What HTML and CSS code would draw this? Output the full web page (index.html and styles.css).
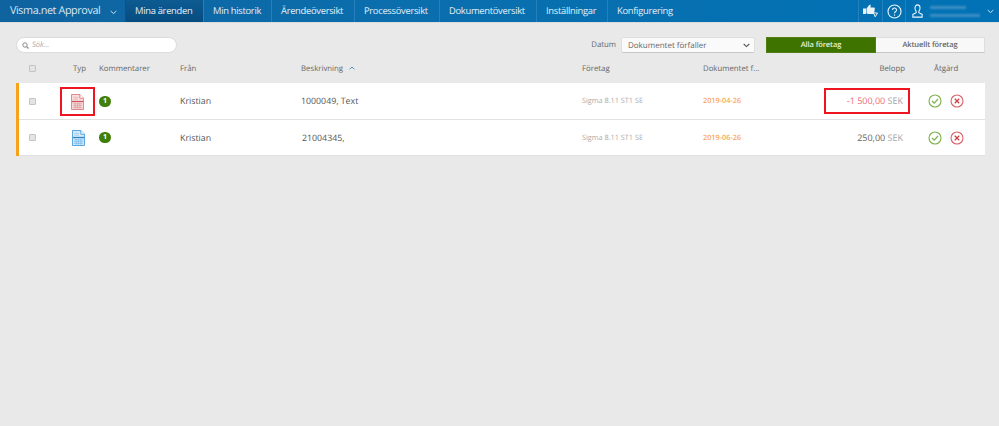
FILE: index.html
```html
<!DOCTYPE html>
<html lang="sv">
<head>
<meta charset="utf-8">
<title>Visma.net Approval</title>
<link rel="stylesheet" href="styles.css">
</head>
<body>
<header class="nav">
  <div class="brand"><span>Visma.net Approval</span>
    <svg class="chev" width="7" height="5" viewBox="0 0 7 5"><path d="M.7 1l2.800 2.600L6.300 1" fill="none" stroke="#cfe3f1" stroke-width="1"/></svg>
  </div>
  <a class="tab active">Mina ärenden</a>
  <a class="tab">Min historik</a>
  <a class="tab">Ärendeöversikt</a>
  <a class="tab">Processöversikt</a>
  <a class="tab">Dokumentöversikt</a>
  <a class="tab">Inställningar</a>
  <a class="tab last">Konfigurering</a>
  <div class="tools">
    <div class="tool t-thumb"><svg width="15" height="14" viewBox="0 0 15 14"><path d="M0 4.500h3v5.500H0zM3.500 4.500L6 1.200 7.600 .5v3h3.700l.6 1-.9 5.500H5L3.500 9.200z" fill="#e8f2f9"/><path d="M8.500 9h6l-2.300 3.800L11 10" fill="none" stroke="#e8f2f9" stroke-width="1"/></svg></div>
    <div class="tool t-help"><svg width="15" height="15" viewBox="0 0 15 15"><circle cx="7.500" cy="7.500" r="6.500" fill="none" stroke="#f2f8fc" stroke-width="1.100"/><path d="M5.500 6a2 2 0 1 1 3 1.700c-.7.400-1 .8-1 1.500" fill="none" stroke="#f2f8fc" stroke-width="1.100"/><circle cx="7.500" cy="11" r=".7" fill="#f2f8fc"/></svg></div>
    <div class="tool t-user">
      <svg width="11" height="14" viewBox="0 0 13 15" preserveAspectRatio="none"><path d="M6.500 1C4.600 1 3.500 2.400 3.500 4.300c0 1.500.6 2.800 1.400 3.500v1.500L1 11.200V14h11v-2.800L8.100 9.300V7.800c.8-.7 1.400-2 1.400-3.500C9.500 2.400 8.400 1 6.500 1z" fill="none" stroke="#f2f8fc" stroke-width="1.200"/></svg>
      <div class="blur"><span class="b1"></span><span class="b2"></span></div>
      <svg class="chev2" width="7" height="5" viewBox="0 0 7 5"><path d="M.7 1l2.800 2.600L6.300 1" fill="none" stroke="#cfe3f1" stroke-width="1"/></svg>
    </div>
  </div>
</header>

<main class="page">
  <div class="filters">
    <label class="search">
      <svg width="7" height="7" viewBox="0 0 7 7"><circle cx="3" cy="3" r="2.200" fill="none" stroke="#8a8a8a" stroke-width="1"/><path d="M4.600 4.600L6.500 6.500" stroke="#8a8a8a" stroke-width="1.200"/></svg>
      <span>Sök...</span>
    </label>
    <div class="right-filters">
      <span class="date-label">Datum</span>
      <div class="select"><span>Dokumentet förfaller</span>
        <svg width="7" height="5" viewBox="0 0 7 5"><path d="M.7 1l2.800 2.600L6.300 1" fill="none" stroke="#555" stroke-width="1.100"/></svg>
      </div>
      <div class="toggle"><span class="opt on">Alla företag</span><span class="opt">Aktuellt företag</span></div>
    </div>
  </div>

  <div class="grid head">
    <div class="c-check"><i class="check"></i></div>
    <div class="c-type"><span class="typ">Typ</span></div>
    <div>Kommentarer</div>
    <div>Från</div>
    <div class="c-sort">Beskrivning <svg width="6" height="4" viewBox="0 0 6 4"><path d="M.6 3.300L3 1l2.400 2.300" fill="none" stroke="#4a90c2" stroke-width="1"/></svg></div>
    <div>Företag</div>
    <div>Dokumentet f...</div>
    <div class="c-amount">Belopp</div>
    <div class="c-action">Åtgärd</div>
  </div>

  <div class="rows">
    <div class="grid row">
      <div class="c-check"><i class="check"></i></div>
      <div class="c-type"><span class="mark">
        <svg width="13" height="16" viewBox="0 0 14 17" preserveAspectRatio="none"><path d="M.5.500h9l4 4v12H.5z" fill="#f9dede" stroke="#de8084"/><path d="M9.500.500v4h4" fill="#fff" stroke="#de8084"/><path d="M2.500 3.500h5M2.500 5.500h5" stroke="#e9b4b6"/><path d="M1 8h12" stroke="#d0585d" stroke-width="1.400"/><path d="M2 10.500h10M2 12.500h10M2 14.500h10M4.500 9.500v6M7 9.500v6M9.500 9.500v6" stroke="#e39a9d" stroke-width=".8"/></svg>
      </span></div>
      <div><b class="badge">1</b></div>
      <div class="from">Kristian</div>
      <div class="desc">1000049, Text</div>
      <div class="company">Sigma 8.11 ST1 SE</div>
      <div class="date">2019-04-26</div>
      <div class="c-amount"><span class="amount-mark"><span class="neg">-1 500,00</span> <span class="cur">SEK</span></span></div>
      <div class="c-action actions">
        <svg width="14" height="14" viewBox="0 0 14 14"><circle cx="7" cy="7" r="6" fill="none" stroke="#7cb24a" stroke-width="1.100"/><path d="M4 7l2.200 2.200L10 5" fill="none" stroke="#7cb24a" stroke-width="1.200"/></svg>
        <svg width="14" height="14" viewBox="0 0 14 14"><circle cx="7" cy="7" r="6" fill="none" stroke="#dc6268" stroke-width="1.100"/><path d="M4.800 4.800l4.400 4.400M9.200 4.800L4.800 9.200" stroke="#cf3f46" stroke-width="1.300"/></svg>
      </div>
    </div>
    <div class="grid row">
      <div class="c-check"><i class="check"></i></div>
      <div class="c-type"><span class="plain">
        <svg width="13" height="16" viewBox="0 0 14 17" preserveAspectRatio="none"><path d="M.5.500h9l4 4v12H.5z" fill="#d6eafa" stroke="#4ba0de"/><path d="M9.500.500v4h4" fill="#fff" stroke="#4ba0de"/><path d="M2.500 3.500h5M2.500 5.500h5" stroke="#a3cdee"/><path d="M1 8h12" stroke="#2a84ca" stroke-width="1.400"/><path d="M2 10.500h10M2 12.500h10M2 14.500h10M4.500 9.500v6M7 9.500v6M9.500 9.500v6" stroke="#7ab8e7" stroke-width=".8"/></svg>
      </span></div>
      <div><b class="badge">1</b></div>
      <div class="from">Kristian</div>
      <div class="desc desc-second">21004345,</div>
      <div class="company">Sigma 8.11 ST1 SE</div>
      <div class="date">2019-06-26</div>
      <div class="c-amount amt-pad"><span class="pos">250,00</span> <span class="cur">SEK</span></div>
      <div class="c-action actions">
        <svg width="14" height="14" viewBox="0 0 14 14"><circle cx="7" cy="7" r="6" fill="none" stroke="#7cb24a" stroke-width="1.100"/><path d="M4 7l2.200 2.200L10 5" fill="none" stroke="#7cb24a" stroke-width="1.200"/></svg>
        <svg width="14" height="14" viewBox="0 0 14 14"><circle cx="7" cy="7" r="6" fill="none" stroke="#dc6268" stroke-width="1.100"/><path d="M4.800 4.800l4.400 4.400M9.200 4.800L4.800 9.200" stroke="#cf3f46" stroke-width="1.300"/></svg>
      </div>
    </div>
  </div>
</main>
</body>
</html>
```
FILE: styles.css
```css
* { box-sizing: border-box; }
html, body { margin: 0; height: 100%; }
body {
  background: #e9e9e9;
  font-family: "Open Sans", "Noto Sans", sans-serif;
  font-size: 8px;
  color: #555;
  overflow: hidden;
  text-rendering: geometricPrecision;
}
.nav {
  display: grid;
  grid-template-columns: 125px 78px 68px 83px 85px 97px 71px auto 1fr;
  height: 23px;
  background: linear-gradient(90deg, #0f639f 0, #0b6ead 40%, #0072b5 100%);
  border-bottom: 1px solid #dcdcdc;
  color: #e3eff7;
  font-size: 9.400px;
  letter-spacing: -.3px;
  line-height: 22px;
}
.brand {
  padding-left: 10px;
  font-size: 10.800px;
  letter-spacing: -.4px;
  display: flex;
  align-items: center;
  color: #d8e8f3;
  white-space: nowrap;
}
.brand .chev { margin-left: 10px; margin-top: 2px; }
.tab {
  padding: 0 0 0 9px;
  border-left: 1px solid #2580bc;
  white-space: nowrap;
}
.tab.active { background: linear-gradient(#0d5b92, #064c80); border-left-color: #0b5489; }
.tools { grid-column: 9; justify-self: end; display: flex; height: 22px; }
.tool { display: flex; align-items: center; border-left: 1px solid #2580bc; justify-content: center; }
.t-thumb { width: 24px; }
.t-help { width: 23px; }
.t-user { width: 94px; justify-content: flex-start; padding-left: 6px; }
.blur { margin-left: 7px; width: 50px; display: flex; flex-direction: column; gap: 5px; filter: blur(1px); }
.blur span { display: block; height: 3px; background: #3f8fc4; }
.b1 { width: 36px; }
.b2 { width: 50px; }
.chev2 { margin-left: 7px; }

.page { padding: 14px 14px 0 16px; }
.filters {
  display: flex;
  justify-content: space-between;
  align-items: flex-start;
  height: 16px;
}
.search {
  width: 161px;
  height: 16px;
  border: 1px solid #dcdcdc;
  border-radius: 8px;
  background: #fff;
  display: flex;
  align-items: center;
  gap: 3px;
  padding-left: 5px;
  font-size: 7.500px;
  font-style: italic;
  color: #aaa;
}
.right-filters { display: flex; align-items: center; }
.date-label { font-size: 7.800px; margin-right: 5px; color: #666; }
.select {
  width: 134px;
  height: 16px;
  background: #fafafa;
  border: 1px solid #dedede;
  border-bottom-color: #c8c8c8;
  border-radius: 2px;
  padding: 0 4px 0 6px;
  display: flex;
  align-items: center;
  justify-content: space-between;
  font-size: 8px;
  color: #666;
  margin-right: 11px;
}
.toggle { display: flex; width: 219px; height: 16px; border-radius: 2px; font-size: 7.500px; letter-spacing: -.1px; font-weight: 600; }
.opt { flex: 1; display: flex; align-items: center; justify-content: center; background: #f8f8f8; border: 1px solid #dedede; border-left: 0; border-bottom-color: #c8c8c8; color: #666; }
.opt.on { flex: none; width: 110px; background: #3f7300; border: 1px solid #4e7f14; color: #e8f2d8; }

.grid {
  display: grid;
  grid-template-columns: 44px 39px 81px 121px 281px 121px 100px 107px 75px;
  align-items: center;
}
.head { margin-top: 4px; height: 39px; align-items: start; padding-top: 6px; font-size: 7.800px; color: #666; line-height: 12px; }
.head > .c-check { padding-top: 2px; }
.c-check { padding-left: 13px; display: flex; }
.check {
  display: block;
  width: 7px;
  height: 7px;
  border: 1px solid #c4c4c4;
  border-radius: 1px;
  background: #e4e4e4;
}
.c-type { display: flex; justify-content: center; }
.c-type .typ { margin-left: 0; }
.c-sort svg { margin-left: 4px; vertical-align: 1px; }
.c-amount { text-align: right; }
.head .c-amount { padding-right: 5px; }
.c-action { padding-left: 18px; }
.head .c-action { padding-left: 24px; }

.rows { background: #fff; border-left: 3px solid #f7a21b; margin-top: -13px; width: 969px; }
.row {
  height: 37px;
  border-bottom: 1px solid #e2e2e2;
  grid-template-columns: 41px 39px 81px 121px 281px 121px 100px 107px 75px;
  font-size: 8.800px;
  color: #555;
}
.row:last-child { height: 36px; }
.row .c-check { padding-left: 10px; }
.mark {
  width: 35px;
  height: 29px;
  margin-top: 1px;
  border: 2px solid #ee1520;
  display: flex;
  align-items: center;
  justify-content: center;
}
.row .c-type { justify-content: flex-start; }
.plain { width: 35px; display: flex; justify-content: center; padding-left: 1px; }
.badge {
  display: block;
  width: 12px;
  height: 11px;
  border-radius: 6px;
  background: #3f7f0a;
  color: #fff;
  font-size: 7px;
  line-height: 11px;
  text-align: center;
}
.from { font-size: 8.800px; color: #555; }
.desc { font-size: 8.800px; color: #555; }
.desc-second { padding-left: 1px; }
.company { font-size: 7.300px; color: #aaa; }
.date { font-size: 7.300px; font-weight: 600; color: #f9a75a; }
.amount-mark {
  display: inline-block;
  width: 86px;
  height: 26px;
  line-height: 22px;
  border: 2px solid #ee1520;
  padding-right: 5px;
  text-align: right;
  font-size: 9px;
}
.amt-pad { padding-right: 7px; font-size: 9px; }
.neg { color: #ee6d78; }
.pos { color: #666; }
.cur { color: #a6a6a6; font-size: 9px; }
.actions { display: flex; gap: 8px; }
```
